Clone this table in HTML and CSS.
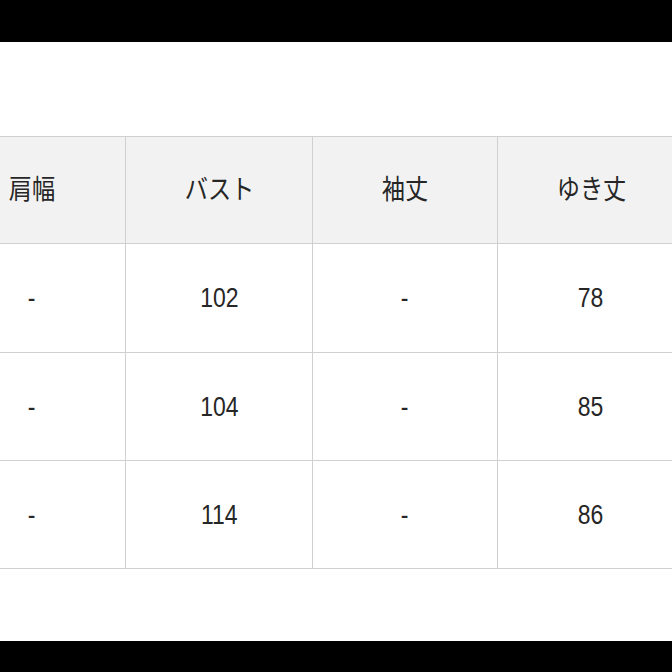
FILE: index.html
```html
<!DOCTYPE html>
<html lang="ja">
<head>
<meta charset="utf-8">
<title>サイズ表</title>
<link rel="stylesheet" href="styles.css">
</head>
<body>
<div class="bar bar-top"></div>
<main class="content">
  <table class="size-table">
    <colgroup>
      <col class="c1">
      <col class="c2">
      <col class="c3">
      <col class="c4">
    </colgroup>
    <thead>
      <tr>
        <th><span class="t">肩幅</span></th>
        <th><span class="t">バスト</span></th>
        <th><span class="t">袖丈</span></th>
        <th><span class="t">ゆき丈</span></th>
      </tr>
    </thead>
    <tbody>
      <tr>
        <td><span class="t">-</span></td>
        <td><span class="t">102</span></td>
        <td><span class="t">-</span></td>
        <td><span class="t">78</span></td>
      </tr>
      <tr>
        <td><span class="t">-</span></td>
        <td><span class="t">104</span></td>
        <td><span class="t">-</span></td>
        <td><span class="t">85</span></td>
      </tr>
      <tr>
        <td><span class="t">-</span></td>
        <td><span class="t">114</span></td>
        <td><span class="t">-</span></td>
        <td><span class="t">86</span></td>
      </tr>
    </tbody>
  </table>
</main>
<div class="bar bar-bottom"></div>
</body>
</html>
```

FILE: styles.css
```css
html, body {
  margin: 0;
  padding: 0;
  height: 672px;
  overflow: hidden;
  background: #000;
}
body {
  display: flex;
  flex-direction: column;
  font-family: "Liberation Sans", "Noto Sans CJK JP", sans-serif;
  color: #262626;
}
.bar {
  background: #000;
  flex: none;
}
.bar-top {
  height: 42px;
}
.bar-bottom {
  height: 31px;
}
.content {
  flex: 1;
  background: #fff;
  padding-top: 94px;
  overflow: hidden;
}
.size-table {
  border-collapse: collapse;
  table-layout: fixed;
  width: 746px;
  margin-left: -62px;
}
.c1 { width: 187px; }
.c2 { width: 187px; }
.c3 { width: 185px; }
.c4 { width: 187px; }
.size-table th,
.size-table td {
  border: 1px solid #d0d0d0;
  text-align: center;
  vertical-align: middle;
  padding: 0;
  font-weight: normal;
}
.size-table th {
  background: #f2f2f2;
  height: 107px;
  font-size: 27px;
  padding-bottom: 6px;
  box-sizing: border-box;
}
.size-table td {
  background: #fff;
  height: 107px;
  font-size: 28px;
}
.size-table tbody tr:first-child td {
  height: 108px;
}
.t {
  display: inline-block;
  transform: scaleX(0.86);
}
.size-table td .t {
  transform: scaleX(0.82);
}
```
